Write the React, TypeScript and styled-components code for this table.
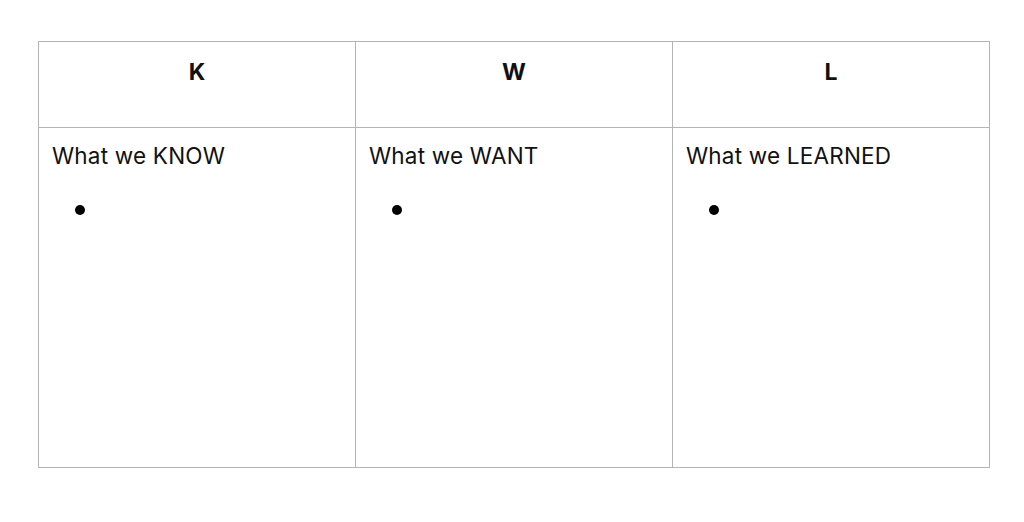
import styled, { createGlobalStyle } from "styled-components";

const GlobalStyle = createGlobalStyle`
  html, body {
    margin: 0;
    padding: 0;
    background: #ffffff;
  }
  body {
    font-family: Inter, "Noto Sans", sans-serif;
    color: #111111;
  }
`;

const Page = styled.div`
  width: 1024px;
  height: 522px;
  padding: 41px 0 0 38px;
  box-sizing: border-box;
`;

const Table = styled.div`
  width: 952px;
  display: grid;
  grid-template-columns: repeat(3, 1fr);
  grid-template-rows: 86px 340px;
  border-top: 1.5px solid #b4b4b4;
  border-left: 1.5px solid #b4b4b4;
  box-sizing: border-box;
`;

const Cell = styled.div`
  border-right: 1.5px solid #b4b4b4;
  border-bottom: 1.5px solid #b4b4b4;
  box-sizing: border-box;
`;

const HeadCell = styled(Cell)`
  display: flex;
  justify-content: center;
  padding-top: 16px;
  font-size: 23px;
  font-weight: 700;
  line-height: 28px;
`;

const BodyCell = styled(Cell)`
  padding: 14px 13px;
`;

const Label = styled.div`
  font-size: 22.5px;
  line-height: 28px;
  font-weight: 400;
  letter-spacing: 0.2px;
`;

const Bullets = styled.ul`
  margin: 31px 0 0;
  padding: 0 0 0 37px;
  list-style: none;
`;

const Bullet = styled.li`
  height: 18px;
  position: relative;
  &::before {
    content: "";
    position: absolute;
    left: -14px;
    top: 4px;
    width: 10px;
    height: 10px;
    border-radius: 50%;
    background: #000;
  }
`;

const columns = [
  { key: "K", label: "What we KNOW" },
  { key: "W", label: "What we WANT" },
  { key: "L", label: "What we LEARNED" },
];

const App = () => {
  return (
    <>
      <GlobalStyle />
      <Page>
        <Table>
          {columns.map((c) => (
            <HeadCell key={c.key}>{c.key}</HeadCell>
          ))}
          {columns.map((c) => (
            <BodyCell key={c.label}>
              <Label>{c.label}</Label>
              <Bullets>
                <Bullet />
              </Bullets>
            </BodyCell>
          ))}
        </Table>
      </Page>
    </>
  );
};

export default App;
